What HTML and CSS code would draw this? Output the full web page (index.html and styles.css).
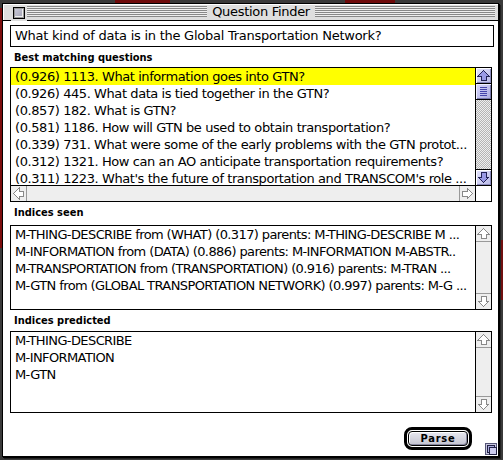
FILE: index.html
```html
<!DOCTYPE html>
<html>
<head>
<meta charset="utf-8">
<link rel="stylesheet" href="styles.css">
</head>
<body>
<div class="window">
  <div class="titlebar">
    <div class="closebox"><div class="closeinner"></div></div>
    <div class="stripes"></div>
    <div class="title">Question Finder</div>
    <div class="stripes"></div>
  </div>
  <div class="content">
    <div class="input">What kind of data is in the Global Transportation Network?</div>
    <div class="label l1">Best matching questions</div>
    <div class="list list1">
      <div class="rows">
        <div class="row sel">(0.926) 1113. What information goes into GTN?</div>
        <div class="row">(0.926) 445. What data is tied together in the GTN?</div>
        <div class="row">(0.857) 182. What is GTN?</div>
        <div class="row">(0.581) 1186. How will GTN be used to obtain transportation?</div>
        <div class="row">(0.339) 731. What were some of the early problems with the GTN protot...</div>
        <div class="row">(0.312) 1321. How can an AO anticipate transportation requirements?</div>
        <div class="row">(0.311) 1223. What's the future of transportation and TRANSCOM's role ...</div>
      </div>
      <div class="vscroll">
        <div class="arrow up active"><svg viewBox="0 0 15 15" width="15" height="15"><path d="M7.5 2.5 L13 8 L10 8 L10 12.5 L5 12.5 L5 8 L2 8 Z"/></svg></div>
        <div class="thumb"><span></span><span></span><span></span><span></span><span></span></div>
        <div class="track dotted"></div>
        <div class="arrow down active"><svg viewBox="0 0 15 15" width="15" height="15"><path d="M7.5 2.5 L13 8 L10 8 L10 12.5 L5 12.5 L5 8 L2 8 Z"/></svg></div>
      </div>
      <div class="hscroll">
        <div class="harrow left"><svg viewBox="0 0 15 15" width="15" height="15"><path d="M7.5 2.5 L13 8 L10 8 L10 12.5 L5 12.5 L5 8 L2 8 Z"/></svg></div>
        <div class="htrack"></div>
        <div class="harrow right"><svg viewBox="0 0 15 15" width="15" height="15"><path d="M7.5 2.5 L13 8 L10 8 L10 12.5 L5 12.5 L5 8 L2 8 Z"/></svg></div>
      </div>
      <div class="corner"></div>
    </div>
    <div class="label l2">Indices seen</div>
    <div class="list list2">
      <div class="rows">
        <div class="row">M-THING-DESCRIBE from (WHAT) (0.317) parents: M-THING-DESCRIBE M ...</div>
        <div class="row">M-INFORMATION from (DATA) (0.886) parents: M-INFORMATION M-ABSTR..</div>
        <div class="row">M-TRANSPORTATION from (TRANSPORTATION) (0.916) parents: M-TRAN ...</div>
        <div class="row">M-GTN from (GLOBAL TRANSPORTATION NETWORK) (0.997) parents: M-G ...</div>
      </div>
      <div class="vscroll">
        <div class="arrow up"><svg viewBox="0 0 15 15" width="15" height="15"><path d="M7.5 2.5 L13 8 L10 8 L10 12.5 L5 12.5 L5 8 L2 8 Z"/></svg></div>
        <div class="track"></div>
        <div class="arrow down"><svg viewBox="0 0 15 15" width="15" height="15"><path d="M7.5 2.5 L13 8 L10 8 L10 12.5 L5 12.5 L5 8 L2 8 Z"/></svg></div>
      </div>
    </div>
    <div class="label l3">Indices predicted</div>
    <div class="list list3">
      <div class="rows">
        <div class="row">M-THING-DESCRIBE</div>
        <div class="row">M-INFORMATION</div>
        <div class="row">M-GTN</div>
      </div>
      <div class="vscroll">
        <div class="arrow up"><svg viewBox="0 0 15 15" width="15" height="15"><path d="M7.5 2.5 L13 8 L10 8 L10 12.5 L5 12.5 L5 8 L2 8 Z"/></svg></div>
        <div class="track"></div>
        <div class="arrow down"><svg viewBox="0 0 15 15" width="15" height="15"><path d="M7.5 2.5 L13 8 L10 8 L10 12.5 L5 12.5 L5 8 L2 8 Z"/></svg></div>
      </div>
    </div>
    <div class="footer">
      <div class="ring"><button class="parse">Parse</button></div>
    </div>
  </div>
  <div class="grow"><span class="g1"></span><span class="g2"></span></div>
</div>
</body>
</html>
```
FILE: styles.css
```css
html, body {
  margin: 0;
  padding: 0;
}
body {
  width: 503px;
  height: 460px;
  overflow: hidden;
  background:
    linear-gradient(to right, #7c0d0d 0 2px, transparent 2px) 0 8px / 503px 240px no-repeat,
    linear-gradient(to right, transparent 0 115px, #6e0a0a 115px 170px, transparent 170px 345px, #6e0a0a 345px 395px, transparent 395px) 0 0 / 503px 3px no-repeat,
    linear-gradient(to bottom, transparent 0 240px, #701010 240px 300px, transparent 300px) 499px 0 / 4px 460px no-repeat,
    #3a3a3a;
  font-family: "DejaVu Sans", "Liberation Sans", sans-serif;
}
.window {
  position: relative;
  margin: 3px 0 0 2px;
  width: 495px;
  height: 452px;
  border: 1px solid #000;
  background: #fff;
  box-shadow: 1px 1px 0 #000, 2px 2px 0 #222;
  display: flex;
  flex-direction: column;
}
.titlebar {
  height: 16px;
  border-bottom: 1px solid #000;
  background: #dedede;
  display: flex;
  align-items: center;
  padding: 0 3px 0 1px;
  box-shadow: inset 1px 1px 0 #fff;
  flex: none;
}
.stripes {
  flex: 1;
  height: 11px;
  margin-top: -2px;
  background: repeating-linear-gradient(to bottom, #888 0 1px, #eeeeee 1px 2px);
}
.closebox {
  width: 12px;
  height: 12px;
  border: 1px solid #000;
  box-sizing: border-box;
  margin: 2px 2px 0 9px;
  background: #9a9a9a;
  box-shadow: 0 0 0 2px #dedede;
  position: relative;
}
.closeinner {
  position: absolute;
  inset: 1px;
  background: linear-gradient(135deg, #c8c8d8, #a8a8b8);
  border-right: 1px solid #eee;
  border-bottom: 1px solid #eee;
}
.title {
  padding: 0 5px;
  font-size: 13px;
  line-height: 16px;
  color: #000;
  letter-spacing: -0.3px;
}
.content {
  flex: 1;
  padding: 4px 4px 0 7px;
  display: flex;
  flex-direction: column;
  font-size: 13px;
  letter-spacing: -0.25px;
}
.input {
  height: 20px;
  border: 1px solid #000;
  padding: 0 4px;
  line-height: 20px;
  white-space: nowrap;
  overflow: hidden;
}
.label {
  font-family: "DejaVu Sans Condensed", "DejaVu Sans", sans-serif;
  font-weight: bold;
  font-size: 11px;
  letter-spacing: 0;
  padding-left: 4px;
}
.l1 { height: 20px; line-height: 21px; }
.l2 { height: 23px; line-height: 22px; }
.l3 { height: 21px; line-height: 21px; }
.list {
  display: grid;
  grid-template-columns: 1fr 16px;
  border: 1px solid #000;
  margin-right: 2px;
}
.list1 { grid-template-rows: 117px 16px; }
.list1 .row { letter-spacing: -0.42px; }
.list2 { height: 83px; }
.list2 .row, .list3 .row { letter-spacing: -0.6px; }
.list3 { height: 80px; }
.rows {
  overflow: hidden;
  min-width: 0;
}
.row {
  height: 17px;
  line-height: 17px;
  padding-left: 4px;
  white-space: nowrap;
  overflow: hidden;
}
.row.sel { background: #ffff00; }
.vscroll {
  border-left: 1px solid #000;
  display: flex;
  flex-direction: column;
  min-height: 0;
}
.arrow {
  height: 16px;
  flex: none;
  box-sizing: border-box;
  display: flex;
  align-items: center;
  justify-content: center;
  background: #eeeeee;
}
.arrow.up { border-bottom: 1px solid #999; }
.arrow.down { border-top: 1px solid #999; }
.arrow.down svg { transform: rotate(180deg); }
.arrow svg path {
  fill: #fff;
  stroke: #888;
  stroke-width: 1;
  shape-rendering: crispEdges;
}
.arrow.active {
  background: linear-gradient(135deg, #e6e6ff, #b8b8e6);
  box-shadow: inset 1px 1px 0 #fff, inset -1px -1px 0 #8888bb;
}
.arrow.active.up { border-bottom: 1px solid #000; }
.arrow.active.down { border-top: 1px solid #000; }
.arrow.active svg path {
  fill: #9a9ae6;
  stroke: #222255;
}
.thumb {
  height: 16px;
  flex: none;
  box-sizing: border-box;
  border-bottom: 1px solid #000;
  background: linear-gradient(135deg, #d8d8ff, #aaaadd);
  box-shadow: inset 1px 1px 0 #eef, inset -1px -1px 0 #7777aa;
  display: flex;
  flex-direction: column;
  align-items: center;
  justify-content: center;
  gap: 1px;
}
.thumb span {
  width: 7px;
  height: 1px;
  background: #4444aa;
}
.track {
  flex: 1;
  background: #eeeeee;
}
.track.dotted {
  background:
    repeating-conic-gradient(#b4b4b4 0 25%, #eeeeee 0 50%) 0 0 / 2px 2px;
}
.hscroll {
  border-top: 1px solid #000;
  display: flex;
  min-width: 0;
}
.harrow {
  width: 16px;
  flex: none;
  box-sizing: border-box;
  display: flex;
  align-items: center;
  justify-content: center;
  background: #eeeeee;
}
.harrow.left { border-right: 1px solid #999; }
.harrow.left svg { transform: rotate(-90deg); }
.harrow.right { border-left: 1px solid #999; }
.harrow.right svg { transform: rotate(90deg); }
.harrow svg path {
  fill: #fff;
  stroke: #888;
  stroke-width: 1;
  shape-rendering: crispEdges;
}
.htrack {
  flex: 1;
  background: #eeeeee;
}
.corner {
  border-top: 1px solid #000;
  border-left: 1px solid #000;
  background: #fff;
}
.footer {
  display: flex;
  justify-content: flex-end;
  padding-right: 22px;
  margin-top: 14px;
}
.ring {
  border: 3px solid #000;
  border-radius: 8px;
  padding: 1px;
  background: #fff;
}
.parse {
  display: block;
  width: 60px;
  height: 15px;
  padding: 0;
  border: 1px solid #000;
  border-radius: 4px;
  background: linear-gradient(to bottom, #e8e8f0, #c4c4d0);
  box-shadow: inset 1px 1px 0 #fff, inset -1px -1px 0 #8888a0;
  font-family: "DejaVu Sans Condensed", "DejaVu Sans", sans-serif;
  font-weight: bold;
  font-size: 11px;
  letter-spacing: 0.8px;
  line-height: 13px;
  color: #000;
}
.grow {
  position: absolute;
  right: 1px;
  bottom: 1px;
  width: 12px;
  height: 12px;
  background: #c8c8e0;
  border: 1px solid #555577;
  box-sizing: border-box;
}
.grow .g1 {
  position: absolute;
  left: 1px;
  top: 1px;
  width: 6px;
  height: 6px;
  border: 1px solid #222244;
  background: #aaaadd;
}
.grow .g2 {
  position: absolute;
  left: 3px;
  top: 3px;
  width: 6px;
  height: 6px;
  border: 1px solid #222244;
  background: #ccccee;
}
```
